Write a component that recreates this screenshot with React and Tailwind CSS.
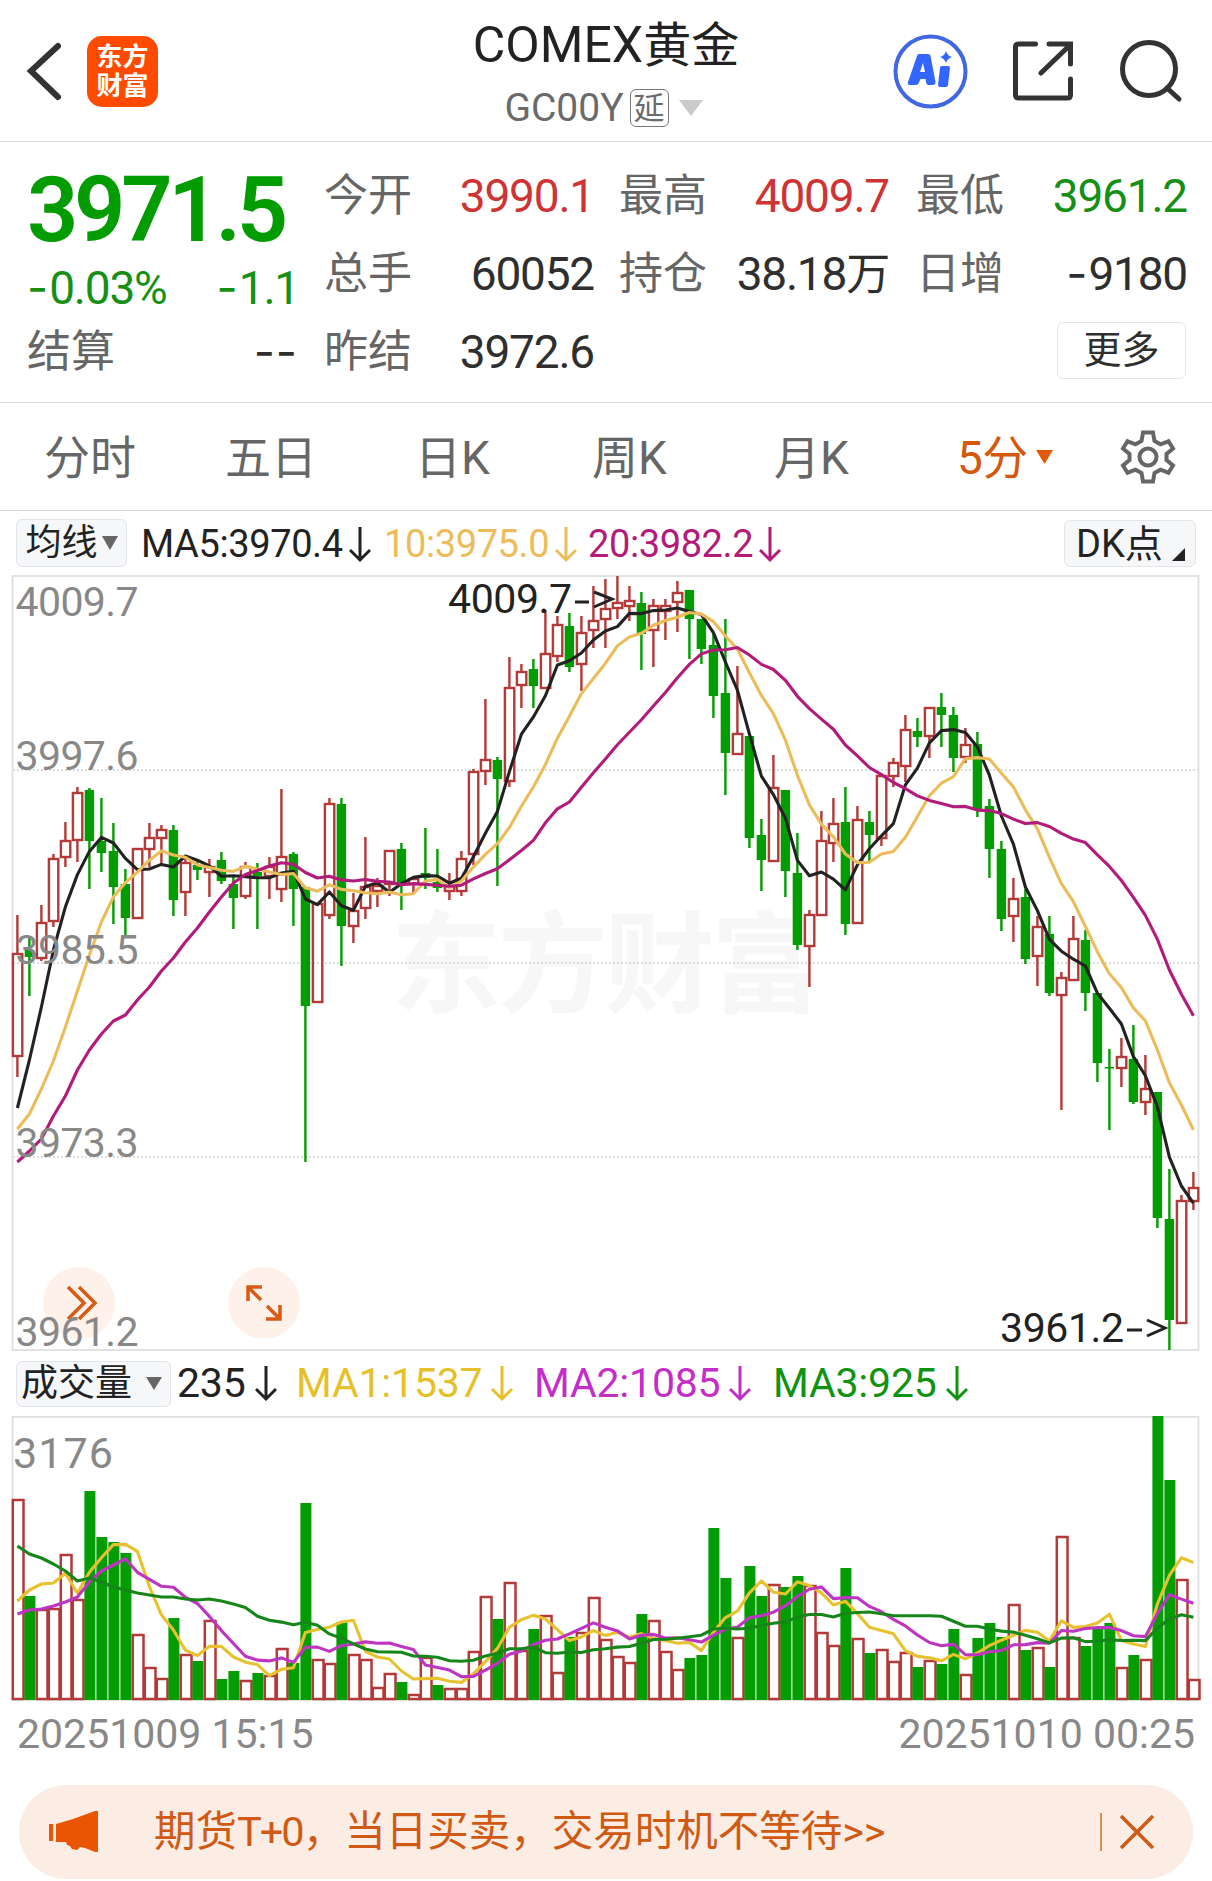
import React from 'react';

// [direction, high, open/close top, open/close bottom, low, volume top, volume direction if it differs]
// all values are y positions in the chart's own coordinate space
const CANDLES = [
    ['r', 915, 954, 1056, 1077, 1499], ['g', 936, 950, 957, 996, 1596], ['r', 905, 923, 958, 961, 1609],
    ['r', 854, 859, 921, 927, 1608], ['r', 822, 841, 857, 867, 1554], ['r', 787, 793, 840, 862, 1599],
    ['g', 788, 790, 841, 889, 1491], ['g', 798, 841, 853, 872, 1537], ['g', 823, 851, 887, 924, 1542],
    ['g', 869, 884, 918, 936, 1553], ['r', 849, 849, 918, 919, 1634], ['r', 823, 838, 849, 867, 1667],
    ['r', 825, 830, 838, 865, 1678], ['g', 825, 830, 900, 916, 1618], ['r', 859, 863, 892, 916, 1654],
    ['g', 861, 865, 870, 880, 1661], ['r', 859, 867, 872, 897, 1620], ['g', 852, 860, 881, 884, 1679],
    ['g', 876, 884, 898, 929, 1671], ['r', 862, 867, 896, 899, 1680], ['g', 863, 872, 876, 929, 1673],
    ['r', 857, 867, 876, 899, 1675], ['r', 789, 857, 889, 902, 1648], ['g', 852, 854, 889, 926, 1663],
    ['g', 887, 887, 1006, 1162, 1503], ['r', 903, 904, 1002, 1003, 1659], ['r', 798, 804, 915, 919, 1663],
    ['g', 798, 804, 926, 966, 1622], ['r', 893, 911, 926, 943, 1654], ['r', 837, 887, 908, 919, 1659],
    ['r', 878, 886, 891, 907, 1687], ['r', 851, 851, 884, 896, 1673], ['g', 843, 849, 884, 910, 1682],
    ['r', 877, 879, 884, 893, 1694], ['g', 828, 873, 878, 889, 1657, 'r'], ['g', 849, 882, 888, 892, 1685],
    ['r', 873, 887, 891, 900, 1688], ['r', 851, 859, 891, 896, 1688], ['r', 769, 772, 854, 865, 1651],
    ['r', 699, 760, 771, 785, 1596], ['g', 757, 760, 779, 886, 1619], ['r', 657, 688, 781, 787, 1582],
    ['r', 664, 672, 685, 708, 1650], ['g', 659, 669, 686, 708, 1629], ['r', 610, 654, 688, 689, 1615],
    ['r', 616, 625, 656, 662, 1672], ['g', 613, 626, 667, 672, 1637], ['r', 616, 633, 664, 691, 1632],
    ['r', 586, 621, 630, 648, 1597], ['r', 579, 609, 619, 648, 1639], ['r', 576, 603, 608, 619, 1656],
    ['r', 586, 601, 606, 621, 1662], ['g', 592, 603, 634, 670, 1614], ['r', 599, 606, 630, 667, 1620],
    ['r', 599, 606, 611, 640, 1651], ['r', 581, 593, 602, 632, 1669], ['g', 590, 590, 619, 659, 1658],
    ['g', 619, 619, 649, 664, 1655], ['g', 634, 645, 696, 718, 1528], ['g', 619, 693, 753, 795, 1578],
    ['r', 666, 734, 754, 755, 1637], ['g', 736, 736, 838, 848, 1566], ['g', 819, 835, 860, 891, 1596],
    ['r', 755, 788, 861, 861, 1584], ['g', 790, 790, 871, 897, 1587], ['g', 833, 873, 945, 950, 1576],
    ['r', 910, 915, 946, 987, 1585], ['r', 811, 841, 915, 915, 1632], ['r', 798, 824, 843, 862, 1645],
    ['g', 787, 822, 924, 935, 1568], ['r', 806, 820, 923, 924, 1638], ['g', 811, 822, 835, 861, 1653],
    ['r', 776, 776, 838, 846, 1649], ['r', 758, 763, 776, 787, 1661], ['r', 715, 730, 766, 782, 1652],
    ['g', 718, 731, 737, 747, 1667], ['r', 708, 708, 736, 758, 1660], ['g', 693, 707, 715, 747, 1664],
    ['g', 707, 715, 758, 772, 1629], ['r', 728, 745, 757, 763, 1674], ['g', 732, 744, 809, 817, 1638],
    ['g', 799, 806, 849, 878, 1623], ['g', 841, 849, 919, 931, 1637], ['r', 878, 899, 916, 942, 1604],
    ['g', 889, 897, 959, 964, 1650], ['r', 916, 927, 956, 986, 1647], ['g', 916, 934, 993, 996, 1667],
    ['r', 972, 978, 995, 1110, 1536], ['r', 916, 939, 980, 981, 1637], ['g', 930, 940, 993, 1011, 1646],
    ['g', 993, 993, 1063, 1082, 1629], ['g', 1049, 1067, 1068, 1130, 1623], ['r', 1038, 1057, 1068, 1087, 1667],
    ['g', 1025, 1059, 1102, 1104, 1655], ['r', 1055, 1089, 1102, 1115, 1659], ['g', 1092, 1092, 1218, 1228, 1416],
    ['g', 1169, 1219, 1320, 1350, 1480], ['r', 1195, 1201, 1323, 1323, 1579], ['r', 1172, 1188, 1201, 1210, 1679],
];

const RED = '#b23a38';
const GREEN = '#039c03';
const VOLUME_BASE = 1699;

const xOf = (i) => 17.4 + i * 12;

const closes = CANDLES.map((c) => (c[0] === 'r' ? c[2] : c[3]));
const volumes = CANDLES.map((c) => c[5]);

// The first period - 1 points depend on bars before the visible range, so they are given
const average = (values, period, seed) =>
    values
        .map((_, i) => {
            if (i < seed.length) return seed[i];
            return values.slice(i - period + 1, i + 1).reduce((a, b) => a + b, 0) / period;
        })
        .map((y, i) => `${xOf(i)},${y.toFixed(1)}`)
        .join(' ');

const PRICE_LINES = [
    { color: '#222222', points: average(closes, 5, [1108, 1060, 1007, 950]) },
    { color: '#ecbc5a', points: average(closes, 10, [1129, 1114, 1089, 1061, 1027, 991, 955, 922, 897]) },
    {
        color: '#b31b7b',
        points: average(closes, 20, [1162, 1151, 1139, 1116, 1096, 1070, 1050, 1034, 1021, 1015, 1000, 987, 971, 958, 942, 928, 912, 897, 883]),
    },
];

const VOLUME_LINES = [
    { color: '#e8c22e', points: average(volumes, 5, [1601, 1590, 1584, 1583]) },
    { color: '#bd35c2', points: average(volumes, 10, [1614, 1610, 1609, 1606, 1602, 1597, 1582, 1571, 1565]) },
    {
        color: '#17861a',
        points: average(volumes, 20, [1546, 1554, 1558, 1564, 1571, 1581, 1578, 1582, 1587, 1590, 1593, 1595, 1597, 1597, 1599, 1600, 1599, 1601, 1604]),
    },
];

const AXIS = [
    ['4009.7', 616],
    ['3997.6', 769.5],
    ['3985.5', 964],
    ['3973.3', 1157],
    ['3961.2', 1346],
];

const TABS = [
    ['分时', 'w-[181px]'],
    ['五日', 'w-[190px]'],
    ['日K', 'w-[177px]'],
    ['周K', 'w-[182px]'],
    ['月K', 'w-[183px]'],
];

const DownArrow = () => (
    <svg className="shrink-0" width="22" height="36" viewBox="0 0 22 36" fill="none" stroke="currentColor" strokeWidth="3">
        <path d="M11 0v33M1 23l10 10 10-10" />
    </svg>
);

// Inter has the wide hyphen that the minus signs need
const Dash = ({ children = '-' }) => <span className="font-[Inter] tracking-[1px]">{children}</span>;

const Stat = ({ label, value, className, tone = 'text-[#2f2f2f]' }) => (
    <div className={`flex h-[78px] items-center justify-between ${className || ''}`}>
        <span className="text-[44px] text-[#666666]">{label}</span>
        <span className={`-mr-[1px] text-[46px] tracking-[-1.2px] ${tone}`}>{value}</span>
    </div>
);

const Header = () => (
    <header className="flex h-[142px] border-b border-[#d6d6d6]">
        <div className="flex w-[400px] items-start">
            <svg className="mt-[40px] ml-[23px]" width="44" height="62" viewBox="0 0 44 62" fill="none" stroke="#333" strokeWidth="6">
                <path d="M35 6L8 31l27 26" strokeLinecap="round" />
            </svg>
            <div className="mt-[36px] ml-[20px] flex h-[71px] w-[71px] flex-col items-center justify-center rounded-[15px] bg-[#ff4b00] text-[26px] leading-[29px] font-bold text-white">
                <span>东方</span>
                <span>财富</span>
            </div>
        </div>
        <div className="flex w-[412px] flex-col items-center">
            <h1 className="mt-[16px] text-[50px] leading-[58px] whitespace-nowrap text-[#222]">
                <span>COMEX</span>
                <span className="text-[48px]">黄金</span>
            </h1>
            <div className="mt-[10px] flex h-[46px] items-center pr-[5px] text-[39px] text-[#6a6a6a]">
                <span>GC00Y</span>
                <span className="ml-[6px] flex h-[38px] w-[39px] items-center justify-center rounded-[6px] border-[1.5px] border-[#777] text-[31px] leading-none">延</span>
                <svg className="ml-[10px]" width="24" height="16" viewBox="0 0 24 16" fill="#cacaca">
                    <path d="M0 0h24L12 16z" />
                </svg>
            </div>
        </div>
        <svg className="w-[400px]" height="140" viewBox="812 0 400 140" fill="none" stroke="#333" strokeWidth="5">
            <circle cx="930.5" cy="71.500" r="35" stroke="#4267e2" strokeWidth="4" />
            <g fill="#3366ff" stroke="none">
                <path
                    fillRule="evenodd"
                    d="M919 54h9q2 0 2.500 2l5 26q0 3-3 3h-4q-2 0-2.500-3l-.5-3h-5l-1.500 3.500q-1 2.500-3 2.500h-6q-3 0-2-3l9-26q.700-2 2-2zM923 63l-3 9h5z"
                />
                <path d="M942 66h6q2 0 2 2l-2 17q0 2-2 2h-6q-2 0-2-2l2-17q0-2 2-2z" />
                <path d="M946 51q1.500 5 6 6-4.500 1.500-6 6-1.500-4.500-6-6 4.500-1 6-6z" />
            </g>
            <path d="M1035.500 44h-17q-3 0-3 3v48q0 3 3 3h49q3 0 3-3V79M1049 44h21.500v20M1070 45l-29 28" strokeLinecap="round" />
            <circle cx="1149" cy="69" r="26.500" />
            <path d="M1167 88l12 11" strokeLinecap="round" />
        </svg>
    </header>
);

const Quote = () => (
    <section className="flex h-[261px] border-b border-[#d6d6d6] pt-[15px]">
        <div className="w-[297px] pl-[27px]">
            <div className="h-[105px] text-[90px] leading-[107px] font-semibold tracking-[-4.3px] text-[#039c03]">3971.5</div>
            <div className="flex h-[51px] items-center justify-between text-[46px] tracking-[-1.2px] text-[#159015]">
                <span><Dash />0.03%</span>
                <span className="-mr-[2px]"><Dash />1.1</span>
            </div>
            <Stat label="结算" value={<Dash>--</Dash>} />
        </div>
        <div className="ml-[27px] w-[269px]">
            <Stat label="今开" value="3990.1" tone="text-[#cf3333]" />
            <Stat label="总手" value="60052" />
            <Stat label="昨结" value="3972.6" />
        </div>
        <div className="ml-[26px] w-[269px]">
            <Stat label="最高" value="4009.7" tone="text-[#cf3333]" />
            <Stat label="持仓" value={<>38.18<span className="text-[44px]">万</span></>} />
        </div>
        <div className="ml-[28px] w-[270px]">
            <Stat label="最低" value="3961.2" tone="text-[#159015]" />
            <Stat label="日增" value={<><Dash />9180</>} />
            <button className="mt-[9px] ml-auto flex h-[57px] w-[129px] items-center justify-center rounded-[6px] border-[1.5px] border-[#e4e6e8] text-[38px] text-[#2f2f2f]">
                更多
            </button>
        </div>
    </section>
);

const Tabs = () => (
    <nav className="flex h-[108px] items-center border-b border-[#d6d6d6] pl-[44px] text-[46px] text-[#666]">
        {TABS.map(([name, width]) => (
            <span key={name} className={`pt-[4px] ${width}`}>{name}</span>
        ))}
        <span className="flex w-[162px] items-center gap-[8px] text-[#d4590f]">
            <span className="pt-[4px] tracking-[-0.5px]">5分</span>
            <svg width="17" height="14" viewBox="0 0 17 14" fill="#e25a06">
                <path d="M0 0h17L8.500 14z" />
            </svg>
        </span>
        <svg className="shrink-0" width="58" height="56" viewBox="-29 -28 58 56" fill="none" stroke="#666" strokeWidth="4">
            <path d="M-5-24.500H5L6.500-16l6 3.300 8-3L25-8.500 18.500-3V3L25 8.500l-4.500 7.200-8-3-6 3.300L5 24.500H-5L-6.500 16l-6-3.300-8 3L-25 8.500l6.500-5.500v-6L-25-8.500l4.500-7.200 8 3 6-3.300z" />
            <circle r="8.500" />
        </svg>
    </nav>
);

const PriceLegend = () => (
    <div className="flex h-[64px] items-center pl-[16px] text-[38px] tracking-[-0.4px]">
        <button className="flex h-[48px] w-[111px] items-center justify-center gap-[4px] rounded-[6px] border-[1.5px] border-[#e3e5e8] bg-[#f6f7f9] text-[36px] tracking-normal text-[#222]">
            均线
            <svg width="16" height="14" viewBox="0 0 16 14" fill="#666">
                <path d="M0 0h16L8 14z" />
            </svg>
        </button>
        <span className="ml-[14px] flex w-[243px] items-center gap-[6px] pt-[3px] text-[#222]">MA5:3970.4<DownArrow /></span>
        <span className="flex w-[204px] items-center gap-[6px] pt-[3px] text-[#ecbc5a]">10:3975.0<DownArrow /></span>
        <span className="flex w-[476px] items-center gap-[6px] pt-[3px] text-[#b31b7b]">20:3982.2<DownArrow /></span>
        <button className="flex h-[47px] w-[132px] items-end rounded-[6px] border-[1.5px] border-[#e3e5e8] bg-[#f6f7f9] pl-[11px] tracking-normal text-[#222]">
            <span className="leading-[43px] whitespace-nowrap">DK<span className="text-[38px]">点</span></span>
            <svg className="mb-[5px] ml-[9px]" width="13" height="13" viewBox="0 0 13 13" fill="#222">
                <path d="M13 0v13H0z" />
            </svg>
        </button>
    </div>
);

const VolumeLegend = () => (
    <div className="flex h-[65px] items-center pl-[16px] text-[41px] tracking-[-0.2px]">
        <button className="flex h-[46px] w-[155px] items-center justify-between rounded-[6px] border-[1.5px] border-[#e3e5e8] bg-[#f6f7f9] pr-[8px] pl-[4px] text-[37px] tracking-normal whitespace-nowrap text-[#222]">
            成交量
            <svg width="16" height="13" viewBox="0 0 16 13" fill="#666">
                <path d="M0 0h16L8 13z" />
            </svg>
        </button>
        <span className="ml-[6px] flex w-[119px] items-center gap-[9px] text-[#222]">235<DownArrow /></span>
        <span className="flex w-[238px] items-center gap-[9px] text-[#e6c028]">MA1:1537<DownArrow /></span>
        <span className="flex w-[239px] items-center gap-[9px] text-[#c42ec8]">MA2:1085<DownArrow /></span>
        <span className="flex items-center gap-[9px] text-[#109310]">MA3:925<DownArrow /></span>
    </div>
);

const PriceChart = () => (
    <svg className="block overflow-visible" width="1212" height="776" viewBox="0 575 1212 776" fill="none">
        <text x="391" y="1004" fontSize="110" fontWeight="700" fill="#f7f7f7" textLength="430">东方财富</text>
        {[770, 963, 1157].map((y) => (
            <path key={y} d={`M13 ${y}H1199`} stroke="#d2d2d2" strokeWidth="1.500" strokeDasharray="2 2" />
        ))}
        <rect x="12.500" y="576" width="1186" height="774" stroke="#dfdfdf" strokeWidth="1.800" />
        {CANDLES.map(([dir, high, top, bottom, low], i) => {
            const x = xOf(i);
            if (dir === 'g') {
                return (
                    <g key={i} fill={GREEN}>
                        <rect x={x - 1.2} y={high} width="2.400" height={low - high} />
                        <rect x={x - 4.7} y={top} width="9.400" height={Math.max(bottom - top, 1.5)} />
                    </g>
                );
            }
            return (
                <g key={i} stroke={RED} strokeWidth="2.400">
                    <path d={`M${x} ${high}V${top}M${x} ${bottom}V${low}`} />
                    <rect x={x - 4.5} y={top} width="9.400" height={bottom - top} />
                </g>
            );
        })}
        {PRICE_LINES.map((line) => (
            <polyline key={line.color} points={line.points} stroke={line.color} strokeWidth="3.100" strokeLinejoin="round" />
        ))}
        {/* Range buttons */}
        <g fill="#fef0e8" fillOpacity="0.900">
            <circle cx="79" cy="1303" r="36" />
            <circle cx="264" cy="1303" r="36" />
        </g>
        <g stroke="#d85a14" strokeWidth="3.500">
            <path d="M68 1287l16 16-16 16M79 1287l16 16-16 16" />
            <path d="M248 1301v-14h14M248 1287l13 13M280 1305v14h-14M280 1319l-13-13" />
        </g>
        <g fontSize="41" fill="#888">
            {AXIS.map(([label, y]) => (
                <text key={label} x="15.500" y={y} textLength="123">{label}</text>
            ))}
        </g>
        <g fontSize="41" fill="#222">
            <text x="448" y="613" textLength="124">4009.7</text>
            <text x="1000" y="1342" textLength="124">3961.2</text>
        </g>
        <g stroke="#222" strokeWidth="3">
            <path d="M575 602h14M594 592l18 7-18 8M1127 1330h15M1147 1320l18 8-18 8" />
        </g>
    </svg>
);

const VolumeChart = () => (
    <svg className="block" width="1212" height="285" viewBox="0 1416 1212 285" fill="none">
        <rect x="12.500" y="1416.900" width="1186" height="283" stroke="#dfdfdf" strokeWidth="1.800" />
        {CANDLES.map((candle, i) => {
            const top = candle[5];
            const dir = candle[6] || candle[0];
            return dir === 'g' ? (
                <rect key={i} x={xOf(i) - 5} y={top} width="11" height={VOLUME_BASE - top + 1} fill={GREEN} />
            ) : (
                <rect key={i} x={xOf(i) - 4.6} y={top + 1} width="10.700" height={VOLUME_BASE - top - 1} stroke={RED} strokeWidth="2.500" />
            );
        })}
        {VOLUME_LINES.map((line) => (
            <polyline key={line.color} points={line.points} stroke={line.color} strokeWidth="3.100" strokeLinejoin="round" />
        ))}
        <text x="13" y="1468" fontSize="43" fill="#888" textLength="100">3176</text>
    </svg>
);

const Banner = () => (
    <div className="mx-[19px] mt-[16px] flex h-[94px] items-center rounded-full bg-[#fbede4] text-[41.5px] text-[#d05a14]">
        <svg className="ml-[30px] shrink-0" width="50" height="44" viewBox="0 0 50 44" fill="#ea5504">
            <path d="M0 14h4v17H0zM7 14l17-5L46 1h3v41h-3l-10-4-5-1-3 3-5-1-2-3-3-1-1-3H7z" />
        </svg>
        <span className="ml-[55px] w-[946px] shrink-0 whitespace-nowrap">
            期货<span className="tracking-[-2px]">T+0</span>，当日买卖，交易时机不等待&gt;&gt;
        </span>
        <span className="h-[38px] w-[1.5px] shrink-0 bg-[#dd8a58]" />
        <svg className="ml-[17px] shrink-0" width="36" height="36" viewBox="0 0 36 36" stroke="#d05a14" strokeWidth="3.500">
            <path d="M2 2l32 32M34 2L2 34" />
        </svg>
    </div>
);

const App = () => (
    <main className="h-[1881px] w-[1212px] overflow-hidden bg-white font-[Roboto,'Noto_Sans_CJK_SC',sans-serif]">
        <Header />
        <Quote />
        <Tabs />
        <PriceLegend />
        <PriceChart />
        <VolumeLegend />
        <VolumeChart />
        <div className="flex h-[68px] items-center justify-between pr-[17px] pl-[17px] text-[41px] text-[#888]">
            <span>20251009 15:15</span>
            <span>20251010 00:25</span>
        </div>
        <Banner />
    </main>
);

export default App;
